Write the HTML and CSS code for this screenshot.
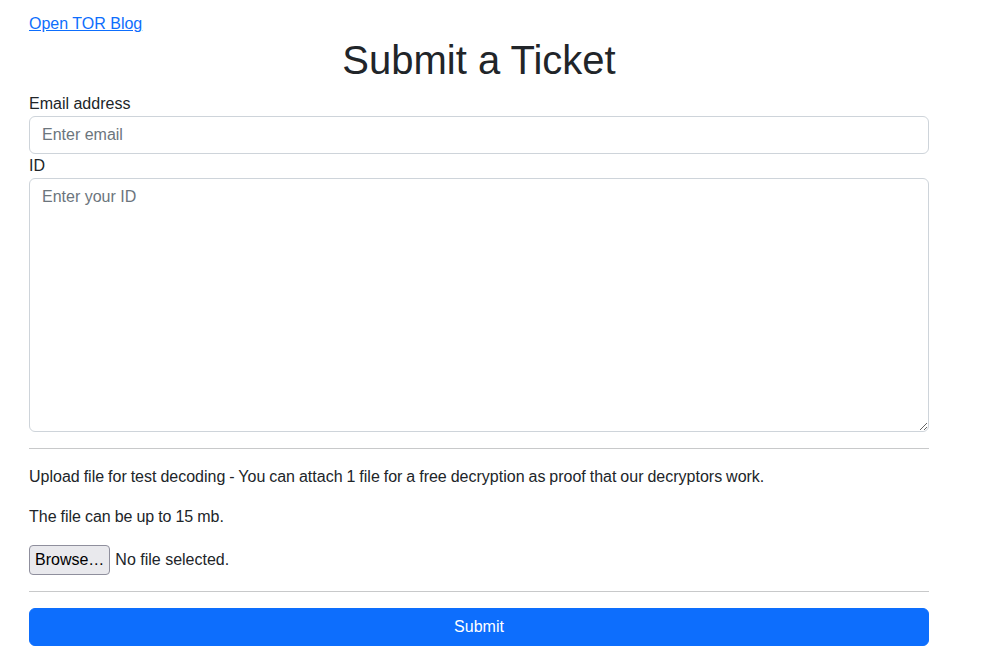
FILE: index.html
```html
<!DOCTYPE html>
<html lang="en">
<head>
<meta charset="utf-8">
<title>Submit a Ticket</title>
<link rel="stylesheet" href="styles.css">
</head>
<body>
<div class="container">
  <a class="blog-link" href="#">Open TOR Blog</a>
  <h1 class="title">Submit a Ticket</h1>
  <form class="ticket-form">
    <label class="form-label" for="email">Email address</label>
    <input class="form-control" id="email" type="email" placeholder="Enter email">
    <label class="form-label" for="uid">ID</label>
    <textarea class="form-control textarea" id="uid" rows="10" placeholder="Enter your ID"></textarea>
    <hr class="divider">
    <p class="note">Upload file for test decoding - You can attach 1 file for a free decryption as proof that our decryptors work.</p>
    <p class="note">The file can be up to 15 mb.</p>
    <div class="file-row">
      <span class="browse-btn">Browse…</span>
      <span class="file-status">No file selected.</span>
    </div>
    <hr class="divider">
    <button class="submit-btn" type="button">Submit</button>
  </form>
</div>
</body>
</html>
```
FILE: styles.css
```css
* { box-sizing: border-box; }
html, body {
  margin: 0;
  padding: 0;
  background: #fff;
}
body {
  font-family: "Liberation Sans", Arial, sans-serif;
  font-size: 16px;
  line-height: 24px;
  color: #212529;
}
.container {
  width: 900px;
  margin-left: 29px;
  padding-top: 12px;
}
.blog-link {
  display: inline-block;
  color: #0d6efd;
  text-decoration: underline;
}
.title {
  margin: 0 0 8px;
  font-size: 40px;
  line-height: 48px;
  font-weight: 400;
  text-align: center;
}
.ticket-form {
  display: flex;
  flex-direction: column;
}
.form-label {
  display: block;
}
.form-control {
  display: block;
  width: 100%;
  padding: 6px 12px;
  font-family: inherit;
  font-size: 16px;
  line-height: 24px;
  color: #212529;
  background: #fff;
  border: 1px solid #ced4da;
  border-radius: 6px;
  outline: none;
  margin: 0;
}
.form-control::placeholder {
  color: #6c757d;
  opacity: 1;
}
.textarea {
  height: 254px;
  resize: vertical;
}
.divider {
  margin: 16px 0;
  border: 0;
  border-top: 1px solid #c8c9ca;
  height: 0;
}
.note {
  margin: 0 0 16px;
  word-spacing: -0.5px;
}
.file-row {
  display: flex;
  align-items: center;
  gap: 5px;
  height: 30px;
}
.browse-btn {
  display: inline-flex;
  align-items: center;
  height: 30px;
  padding: 0 5px;
  background: #e9e9ed;
  border: 1px solid #8f8f9d;
  border-radius: 4px;
  color: #000;
  font-size: 16px;
}
.file-status {
  color: #212529;
}
.submit-btn {
  display: block;
  width: 100%;
  height: 38px;
  padding: 6px 12px;
  font-family: inherit;
  font-size: 16px;
  line-height: 24px;
  color: #fff;
  background: #0d6efd;
  border: 1px solid #0d6efd;
  border-radius: 6px;
}
```
